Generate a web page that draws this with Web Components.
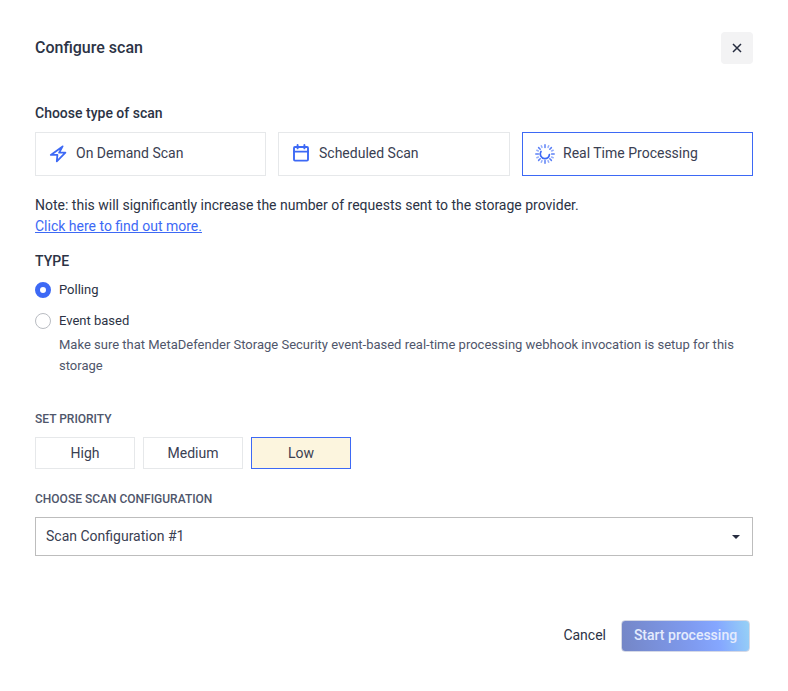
<!DOCTYPE html>
<html lang="en">
<head>
<meta charset="utf-8">
<title>Configure scan</title>
<style>
  html, body { margin: 0; background: #fff; }
  body { font-family: Roboto, "Liberation Sans", sans-serif; color: #2c3345; }
</style>
</head>
<body>
<scan-dialog>
  <span slot="title">Configure scan</span>

  <section-label variant="strong" top="41" bottom="11">Choose type of scan</section-label>
  <type-row>
    <type-card icon="bolt">On Demand Scan</type-card>
    <type-card icon="calendar">Scheduled Scan</type-card>
    <type-card icon="spinner" selected>Real Time Processing</type-card>
  </type-row>

  <scan-note href="#">
    Note: this will significantly increase the number of requests sent to the storage provider.
    <span slot="link">Click here to find out more.</span>
  </scan-note>

  <section-label variant="strong" top="16" bottom="12">TYPE</section-label>
  <radio-option checked>Polling</radio-option>
  <radio-option>Event based
    <span slot="help">Make sure that MetaDefender Storage Security event-based real-time processing webhook invocation is setup for this storage</span>
  </radio-option>

  <section-label top="35" bottom="10">SET PRIORITY</section-label>
  <priority-row>
    <priority-button>High</priority-button>
    <priority-button>Medium</priority-button>
    <priority-button selected>Low</priority-button>
  </priority-row>

  <section-label top="22" bottom="10">CHOOSE SCAN CONFIGURATION</section-label>
  <config-select>Scan Configuration #1</config-select>

  <dialog-footer>
    <footer-link>Cancel</footer-link>
    <start-button>Start processing</start-button>
  </dialog-footer>
</scan-dialog>

<script>
  // small helper, every element below is just a shadow root with its own styles
  const shadow = (el, html) => {
    el.attachShadow({ mode: 'open' }).innerHTML = html;
  };

  const ICONS = {
    bolt: `<svg width="20" height="20" viewBox="0 0 20 20" fill="none" stroke="#3d69f5" stroke-width="1.8" stroke-linejoin="round">
        <path d="M14.6 2.4 2.8 10.9h6.6l-.6 6.4 8.6-8.6h-6.3z"/></svg>`,
    calendar: `<svg width="20" height="20" viewBox="0 0 20 20" fill="none" stroke="#3d69f5" stroke-width="1.9" stroke-linecap="round" stroke-linejoin="round">
        <rect x="3" y="3" width="14" height="13.6" rx="1"/>
        <path d="M3 7.6h14M6.6 1v3.4M13.4 1v3.4"/></svg>`,
    spinner: `<svg width="20" height="20" viewBox="0 0 20 20" fill="none" stroke="#3d69f5" stroke-width="1.5" stroke-linecap="round">
        <path d="M10 .8v2.6M10 16.6v2.6M.8 10h2.6M16.6 10h2.6M3.6 3.6l1.6 1.6M14.8 14.8l1.6 1.6M3.6 16.4l1.6-1.6M14.8 5.2l1.6-1.6" opacity=".85"/>
        <path d="M6.3 1.8l.7 1.6M13 16.6l.7 1.6M1.8 13.7l1.6-.7M16.6 7l1.6-.7M1.8 6.3l1.6.7M16.6 13l1.6.7M6.3 18.2l.7-1.6M13 3.4l.7-1.6" opacity=".55"/>
        <path d="M6 7.4a4.7 4.7 0 0 0 3.8 7.2 4.7 4.7 0 0 0 4.6-4" stroke-width="1.7"/></svg>`
  };

  class ScanDialog extends HTMLElement {
    constructor() {
      super();
      shadow(this, `
        <style>
          :host { display: block; box-sizing: border-box; width: 788px; height: 691px; padding: 32px 35px 0; }
          header { display: flex; justify-content: space-between; align-items: center; height: 32px; }
          h1 { margin: 0; font-size: 16px; font-weight: 500; line-height: 30px; color: #2c3345; }
          button { width: 32px; height: 32px; padding: 0; border: 0; border-radius: 4px; background: #f3f3f4; display: flex; align-items: center; justify-content: center; }
        </style>
        <header>
          <h1><slot name="title"></slot></h1>
          <button aria-label="Close">
            <svg width="10" height="10" viewBox="0 0 10 10" stroke="#262c3f" stroke-width="1.5" fill="none"><path d="M1 1l8 8M9 1 1 9"/></svg>
          </button>
        </header>
        <slot></slot>`);
    }
  }

  class SectionLabel extends HTMLElement {
    constructor() {
      super();
      shadow(this, `
        <style>
          :host { display: block; font-size: 12px; font-weight: 500; line-height: 16px; color: #4f566b; }
          :host([variant=strong]) { font-size: 14px; line-height: 16px; color: #2c3345; }
        </style>
        <slot></slot>`);
    }
    connectedCallback() {
      this.style.marginTop = (this.getAttribute('top') || 0) + 'px';
      this.style.marginBottom = (this.getAttribute('bottom') || 0) + 'px';
    }
  }

  class TypeRow extends HTMLElement {
    constructor() {
      super();
      shadow(this, `
        <style>:host { display: grid; grid-template-columns: 231px 232px 231px; gap: 12px; }</style>
        <slot></slot>`);
    }
  }

  class TypeCard extends HTMLElement {
    constructor() {
      super();
      shadow(this, `
        <style>
          :host { display: flex; align-items: center; gap: 8px; box-sizing: border-box; height: 44px; padding: 0 12px; border: 1px solid #e6e8ea; font-size: 14px; color: #3a4052; background: #fff; }
          :host([selected]) { border-color: #3d69f5; }
          .icon { width: 20px; height: 20px; flex: none; display: block; }
          .label { padding-bottom: 2px; }
          svg { display: block; }
        </style>
        <span class="icon">${ICONS[this.getAttribute('icon')] || ''}</span>
        <span class="label"><slot></slot></span>`);
    }
  }

  class ScanNote extends HTMLElement {
    constructor() {
      super();
      shadow(this, `
        <style>
          :host { display: block; margin-top: 19px; font-size: 14px; line-height: 21px; color: #2c3345; }
          a { color: #3d69f5; display: block; text-decoration: underline; }
        </style>
        <slot></slot>
        <a href="${this.getAttribute('href') || '#'}"><slot name="link"></slot></a>`);
    }
  }

  class RadioOption extends HTMLElement {
    constructor() {
      super();
      shadow(this, `
        <style>
          :host { display: grid; grid-template-columns: 16px 1fr; column-gap: 8px; align-items: center; margin-bottom: 9px; font-size: 13px; line-height: 18px; color: #2c3345; }
          .dot { box-sizing: border-box; width: 16px; height: 16px; border-radius: 50%; border: 1px solid #b9bcc2; background: #fff; }
          :host([checked]) .dot { border: 5px solid #3d69f5; }
          .help { grid-column: 2; margin-top: 4px; line-height: 21px; color: #4f566b; }
          ::slotted([slot=help]) { display: block; }
        </style>
        <span class="dot"></span>
        <span><slot></slot></span>
        <div class="help"><slot name="help"></slot></div>`);
    }
  }

  class PriorityRow extends HTMLElement {
    constructor() {
      super();
      shadow(this, `
        <style>:host { display: flex; gap: 8px; }</style>
        <slot></slot>`);
    }
  }

  class PriorityButton extends HTMLElement {
    constructor() {
      super();
      shadow(this, `
        <style>
          :host { display: flex; align-items: center; justify-content: center; box-sizing: border-box; width: 100px; height: 32px; border: 1px solid #e6e8ea; font-size: 14px; color: #3a4052; background: #fff; }
          :host([selected]) { border-color: #3d69f5; background: #fcf5de; }
        </style>
        <slot></slot>`);
    }
  }

  class ConfigSelect extends HTMLElement {
    constructor() {
      super();
      shadow(this, `
        <style>
          :host { display: flex; align-items: center; justify-content: space-between; box-sizing: border-box; height: 39px; padding: 0 12px 2px 10px; border: 1px solid #bdbdbd; font-size: 14px; color: #3a4052; }
          i { width: 0; height: 0; border: 4px solid transparent; border-top: 4px solid #262c3f; border-bottom: 0; margin-top: 2px; }
        </style>
        <slot></slot><i></i>`);
    }
  }

  class DialogFooter extends HTMLElement {
    constructor() {
      super();
      shadow(this, `
        <style>:host { display: flex; justify-content: flex-end; align-items: center; gap: 15px; margin-top: 64px; padding-right: 3px; }</style>
        <slot></slot>`);
    }
  }

  class FooterLink extends HTMLElement {
    constructor() {
      super();
      shadow(this, `
        <style>:host { display: block; padding-bottom: 2px; font-size: 14px; color: #2c3345; }</style>
        <slot></slot>`);
    }
  }

  class StartButton extends HTMLElement {
    constructor() {
      super();
      shadow(this, `
        <style>
          :host { display: flex; align-items: center; justify-content: center; box-sizing: border-box; width: 129px; height: 32px; padding-bottom: 2px; border: 1px solid #d5d9e6; border-radius: 4px; font-size: 14px; font-weight: 500; color: #e4ebfd;
            background: linear-gradient(80deg, #7486c6 0%, #7f9bf0 55%, #85a7ff 75%, #96d1f6 100%); }
        </style>
        <slot></slot>`);
    }
  }

  customElements.define('scan-dialog', ScanDialog);
  customElements.define('section-label', SectionLabel);
  customElements.define('type-row', TypeRow);
  customElements.define('type-card', TypeCard);
  customElements.define('scan-note', ScanNote);
  customElements.define('radio-option', RadioOption);
  customElements.define('priority-row', PriorityRow);
  customElements.define('priority-button', PriorityButton);
  customElements.define('config-select', ConfigSelect);
  customElements.define('dialog-footer', DialogFooter);
  customElements.define('footer-link', FooterLink);
  customElements.define('start-button', StartButton);
</script>
</body>
</html>
